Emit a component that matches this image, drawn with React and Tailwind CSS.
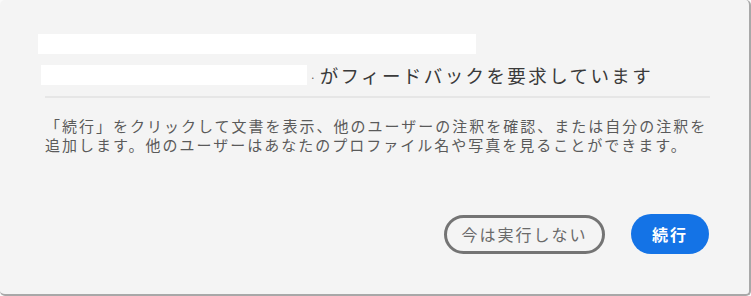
import React from "react";

export default function App() {
  const jp = { fontFamily: '"Noto Sans CJK JP", "Noto Sans", sans-serif' };
  return (
    <div className="w-[751px] h-[296px] bg-[#fafafa] overflow-hidden">
      <div
        className="w-[751px] h-[296px] bg-[#f4f4f4] rounded-[5px] border-r-2 border-b-2 border-[#a8a8a8] flex flex-col pl-[38px] pr-[40px]"
        style={jp}
      >
        <div className="mt-[34px] h-[20px] w-[438px] bg-white" />
        <div className="mt-[10px] flex items-center h-[22px]">
          <div className="ml-[3px] w-[266px] h-[20px] bg-white" />
          <span className="ml-[3px] mt-[6px] text-[#555] text-[10px] leading-none">·</span>
          <span className="ml-[4px] text-[18.5px] tracking-[2.4px] text-[#3a3a3a] leading-none">
            がフィードバックを要求しています
          </span>
        </div>
        <div className="mt-[10px] ml-[7px] h-[2px] w-[665px] bg-[#e6e6e6]" />
        <p className="mt-[18px] ml-[7px] text-[15px] tracking-[2px] leading-[19px] text-[#5a5a5a] w-[680px]">
          「続行」をクリックして文書を表示、他のユーザーの注釈を確認、または自分の注釈を
          <br />
          追加します。他のユーザーはあなたのプロファイル名や写真を見ることができます。
        </p>
        <div className="mt-auto mb-[40px] flex justify-end items-center gap-[26px] pr-0">
          <button className="h-[39px] w-[161px] rounded-full border-[3px] border-[#747474] text-[#6a6a6a] text-[16px] tracking-[2px] flex items-center justify-center">
            今は実行しない
          </button>
          <button className="h-[40px] w-[78px] rounded-full bg-[#1473e6] text-white text-[16px] font-bold tracking-[2px] flex items-center justify-center">
            続行
          </button>
        </div>
      </div>
    </div>
  );
}
